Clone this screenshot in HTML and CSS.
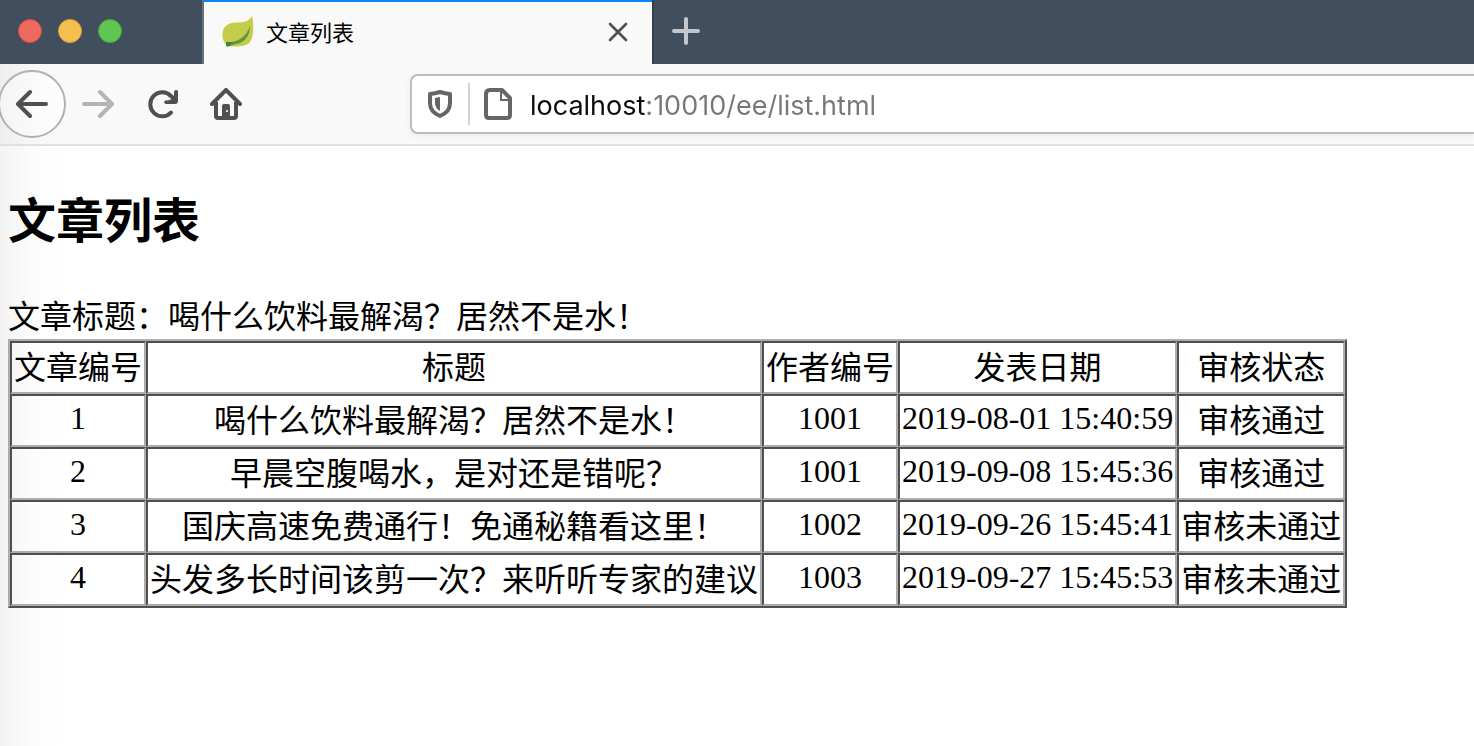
FILE: index.html
```html
<!DOCTYPE html>
<html lang="zh-CN">
<head>
<meta charset="utf-8">
<title>文章列表</title>
<link rel="stylesheet" href="styles.css">
</head>
<body>
<header class="browser">
  <div class="tabbar">
    <div class="lights">
      <button class="light red" aria-label="关闭窗口"></button>
      <button class="light yellow" aria-label="最小化"></button>
      <button class="light green" aria-label="最大化"></button>
    </div>
    <div class="tab">
      <svg class="favicon" viewBox="0 0 32 32" aria-hidden="true">
        <path d="M30 0C32 8 32 20 28 26C24 31 14 31 7 30C0 27-1 18 2 12C7 5 15 7 22 6C26 5 28 3 30 0Z" fill="#c3cd4b"/>
        <path d="M4 26C14 27 24 22 28 10C28 19 23 27 14 28C10 29 8 30 5 31Z" fill="#5f9440"/>
        <path d="M4 26L10 26L8 30L4 30Z" fill="#3f8443"/>
      </svg>
      <span class="tab-title">文章列表</span>
      <button class="icon-button close" aria-label="关闭标签页">
        <svg width="20" height="20" viewBox="0 0 20 20"><path d="M2 2L18 18M18 2L2 18" fill="none" stroke="#4f4f50" stroke-width="2.6" stroke-linecap="round"/></svg>
      </button>
    </div>
    <button class="icon-button new-tab" aria-label="新建标签页">
      <svg width="28" height="28" viewBox="0 0 28 28"><path d="M14 2V26M2 14H26" fill="none" stroke="#c2c6ce" stroke-width="4" stroke-linecap="round"/></svg>
    </button>
  </div>
  <nav class="toolbar">
    <button class="icon-button back" aria-label="后退">
      <svg width="32" height="32" viewBox="0 0 32 32"><path d="M30 16H3M14 4L2 16L14 28" fill="none" stroke="#505051" stroke-width="4" stroke-linecap="round" stroke-linejoin="round"/></svg>
    </button>
    <button class="icon-button nav-button" aria-label="前进" disabled>
      <svg width="32" height="32" viewBox="0 0 32 32"><path d="M2 16H29M18 4L30 16L18 28" fill="none" stroke="#b4b4b4" stroke-width="4" stroke-linecap="round" stroke-linejoin="round"/></svg>
    </button>
    <button class="icon-button nav-button" aria-label="刷新">
      <svg width="32" height="32" viewBox="0 0 32 32"><path d="M25 24.500A12 12 0 1 1 25 8L28 11" fill="none" stroke="#505051" stroke-width="4" stroke-linecap="round"/><path d="M28 3.500Q30 1 32 3V13Q32 16 29 16H20Q17 15 19 12.500Q24 13 28 9Z" fill="#505051"/></svg>
    </button>
    <button class="icon-button nav-button" aria-label="主页">
      <svg width="32" height="32" viewBox="0 0 32 32"><path d="M2 16L16 2L30 16" fill="none" stroke="#505051" stroke-width="4" stroke-linecap="round" stroke-linejoin="round"/><path d="M6 14V28Q6 30 8 30H24Q26 30 26 28V14" fill="none" stroke="#505051" stroke-width="4"/><path d="M12 30V18Q12 16 14 16H18Q20 16 20 18V30Z" fill="#505051"/><path d="M16 22H18V24H16Z" fill="#ddd"/></svg>
    </button>
    <div class="address">
      <svg class="shield" width="24" height="28" viewBox="0 0 24 28" aria-hidden="true"><path d="M2 4Q7 3.500 12 2Q17 3.500 22 4V13Q22 22 12 26Q2 22 2 13Z" fill="none" stroke="#666" stroke-width="4" stroke-linejoin="round"/><path d="M12 7V21Q7 18 7 13V8Z" fill="#666"/></svg>
      <span class="divider"></span>
      <svg class="document" width="28" height="32" viewBox="0 0 28 32" aria-hidden="true"><path d="M6 2H18L26 10V27Q26 30 23 30H5Q2 30 2 27V6Q2 2 6 2Z" fill="none" stroke="#666" stroke-width="4" stroke-linejoin="round"/><path d="M17 3V12H25" fill="none" stroke="#666" stroke-width="2"/></svg>
      <input class="url" type="text" aria-label="网址" value="localhost:10010/ee/list.html">
    </div>
  </nav>
</header>
<main class="page">
  <h2 class="heading">文章列表</h2>
  <p class="caption">文章标题：喝什么饮料最解渴？居然不是水！</p>
  <table class="articles">
    <thead>
      <tr><th>文章编号</th><th>标题</th><th>作者编号</th><th>发表日期</th><th>审核状态</th></tr>
    </thead>
    <tbody>
      <tr><td class="num">1</td><td>喝什么饮料最解渴？居然不是水！</td><td class="num">1001</td><td class="num">2019-08-01 15:40:59</td><td>审核通过</td></tr>
      <tr><td class="num">2</td><td>早晨空腹喝水，是对还是错呢？</td><td class="num">1001</td><td class="num">2019-09-08 15:45:36</td><td>审核通过</td></tr>
      <tr><td class="num">3</td><td>国庆高速免费通行！免通秘籍看这里！</td><td class="num">1002</td><td class="num">2019-09-26 15:45:41</td><td>审核未通过</td></tr>
      <tr><td class="num">4</td><td>头发多长时间该剪一次？来听听专家的建议</td><td class="num">1003</td><td class="num">2019-09-27 15:45:53</td><td>审核未通过</td></tr>
    </tbody>
  </table>
</main>
</body>
</html>
```
FILE: styles.css
```css
* {
  box-sizing: border-box;
}

body {
  margin: 0;
  min-height: 100vh;
  overflow-x: hidden;
  background: linear-gradient(to right, #f3f3f3, #fcfcfc 32px, #fff 64px);
  color: #000;
  font-family: "Liberation Serif", "Noto Sans CJK SC", serif;
}

.icon-button {
  display: flex;
  align-items: center;
  justify-content: center;
  flex: none;
  padding: 0;
  border: 0;
  background: none;
}

.tabbar {
  display: flex;
  height: 64px;
  background: #404e5e;
}

.lights {
  display: flex;
  gap: 16px;
  width: 204px;
  padding: 19px 0 0 18px;
  border-right: 2px solid #62707f;
}

.light {
  width: 24px;
  height: 24px;
  padding: 0;
  border: 1px solid;
  border-radius: 50%;
}

.red {
  background: #ed6a5e;
  border-color: #d8493f;
}

.yellow {
  background: #f5bf4f;
  border-color: #dea035;
}

.green {
  background: #61c554;
  border-color: #46a935;
}

.tab {
  display: flex;
  align-items: center;
  width: 448px;
  padding: 0 24px 2px 18px;
  border-top: 2px solid #0a84ff;
  background: #f9f9fa;
}

.favicon {
  width: 32px;
  height: 32px;
}

.tab-title {
  flex: 1;
  margin-left: 12px;
  padding-bottom: 2px;
  font-family: "Noto Sans CJK SC", sans-serif;
  font-size: 22px;
  line-height: 32px;
}

.new-tab {
  width: 68px;
  padding: 0 2px 2px 0;
  border-left: 2px solid #334150;
}

.toolbar {
  display: flex;
  align-items: center;
  height: 82px;
  border-bottom: 2px solid #e0e0e0;
  background: linear-gradient(to right, #eee, #f7f7f7 32px, #f9f9fa 64px);
}

.back {
  width: 68px;
  height: 68px;
  margin-left: -2px;
  border: 2px solid #b0b0b0;
  border-radius: 50%;
  background: linear-gradient(to right, #f4f4f4, #fff);
}

.nav-button {
  width: 64px;
  height: 64px;
}

.address {
  display: flex;
  flex: 1;
  align-items: center;
  height: 60px;
  margin-left: 152px;
  padding-left: 16px;
  border: 2px solid #bdbdbd;
  border-right: 0;
  border-radius: 8px 0 0 8px;
  background: #fff;
  box-shadow: 0 2px 6px rgba(0, 0, 0, 0.06);
}

.divider {
  width: 2px;
  height: 42px;
  margin: 0 14px 0 16px;
  background: #d2d2d2;
}

.url {
  flex: 1;
  min-width: 0;
  height: 48px;
  margin-left: 18px;
  padding: 2px 0 0;
  border: 0;
  outline: 0;
  background: linear-gradient(to right, #0c0c0d 116px, #777 116px);
  background-clip: text;
  -webkit-background-clip: text;
  color: transparent;
  caret-color: #0c0c0d;
  font-family: Inter, sans-serif;
  font-size: 27px;
}

.page {
  padding: 42px 8px 0;
}

.heading {
  margin: 0 0 40px;
  font-size: 48px;
  line-height: 68px;
}

.caption {
  margin: 0;
  font-size: 32px;
  line-height: 43px;
}

.articles {
  border: 2px solid;
  border-color: #adadad #4f4f4f #4f4f4f #adadad;
  border-spacing: 0;
  font-size: 32px;
  line-height: 45px;
  text-align: center;
  white-space: nowrap;
}

.articles th,
.articles td {
  padding: 3px 2px 1px;
  border: 2px solid;
  border-color: #4f4f4f #adadad #adadad #4f4f4f;
  font-weight: 400;
}

.articles .num {
  padding: 0 2px 4px;
}
```
